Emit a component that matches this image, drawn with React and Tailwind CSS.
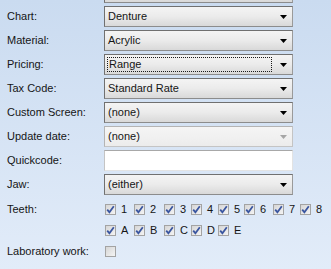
import React from 'react';

const teethTop = [
  { label: '1', w: 'w-[29px]' },
  { label: '2', w: 'w-[30px]' },
  { label: '3', w: 'w-[27px]' },
  { label: '4', w: 'w-[27px]' },
  { label: '5', w: 'w-[26px]' },
  { label: '6', w: 'w-[29px]' },
  { label: '7', w: 'w-[27px]' },
  { label: '8', w: 'w-[27px]' },
];

const teethBottom = [
  { label: 'A', w: 'w-[29px]' },
  { label: 'B', w: 'w-[30px]' },
  { label: 'C', w: 'w-[27px]' },
  { label: 'D', w: 'w-[27px]' },
  { label: 'E', w: 'w-[27px]' },
];

function Arrow({ disabled }) {
  return (
    <svg width="7" height="4" viewBox="0 0 7 4" className="shrink-0">
      <path d="M0 0H7L3.5 4Z" fill={disabled ? '#a6a6a6' : '#000'} />
    </svg>
  );
}

function Combo({ value, disabled, focused }) {
  return (
    <div
      className={`flex h-[21px] w-[189px] items-center border border-t-[#707070] border-l-[#707070] border-b-[#8c8c8c] border-r-[#9a9a9a] bg-linear-to-b ${
        disabled
          ? 'from-[#f5f5f5] via-[#f1f1f1] to-[#ececec] border-t-[#b4b4b4] border-l-[#b4b4b4] border-b-[#c4c4c4] border-r-[#c4c4c4]'
          : 'from-[#f4f4f4] via-[#ebebeb] to-[#d9d9d9]'
      }`}
    >
      <div className="flex h-full flex-1 items-center p-[2px] pr-[8px]">
        <div
          className={`flex h-full flex-1 items-center pl-[1px] ${
            focused ? 'border border-dotted border-[#1a1a1a]' : ''
          }`}
        >
          {value}
        </div>
      </div>
      <div className="mr-[5px] flex items-center">
        <Arrow disabled={disabled} />
      </div>
    </div>
  );
}

function Check({ checked }) {
  return (
    <div className="flex h-[11px] w-[11px] items-center justify-center border border-[#a3a3a3] bg-linear-to-br from-[#d6d6d6] to-[#f4f4f4]">
      {checked && (
        <svg width="9" height="9" viewBox="0 0 9 9">
          <path d="M1.2 4.6L3.4 7.2L7.8 1.2" fill="none" stroke="#3a56a0" strokeWidth="1.8" />
        </svg>
      )}
    </div>
  );
}

function Row({ label, children }) {
  return (
    <div className="mb-[3px] flex h-[21px] items-center">
      <div className="w-[104px] pl-[7px]">{label}</div>
      {children}
    </div>
  );
}

function TeethRow({ items }) {
  return (
    <div className="flex">
      {items.map((t) => (
        <div key={t.label} className={`flex items-center ${t.w}`}>
          <Check checked />
          <span className="ml-[5px]">{t.label}</span>
        </div>
      ))}
    </div>
  );
}

export default function App() {
  return (
    <div
      className="h-[269px] w-[331px] overflow-hidden bg-linear-to-b from-[#cadbf0] to-[#e2ecf9] text-[11px] leading-none text-[#151515]"
      style={{ fontFamily: '"Liberation Sans", Arial, sans-serif' }}
    >
      <div className="-mt-[18px]">
        <Row label="">
          <Combo value="" />
        </Row>
        <Row label="Chart:">
          <Combo value="Denture" />
        </Row>
        <Row label="Material:">
          <Combo value="Acrylic" />
        </Row>
        <Row label="Pricing:">
          <Combo value="Range" focused />
        </Row>
        <Row label="Tax Code:">
          <Combo value="Standard Rate" />
        </Row>
        <Row label="Custom Screen:">
          <Combo value="(none)" />
        </Row>
        <Row label="Update date:">
          <Combo value="(none)" disabled />
        </Row>
        <Row label="Quickcode:">
          <div className="h-[21px] w-[189px] border border-t-[#a8a8a8] border-l-[#c4c4c4] border-b-[#e3e3e3] border-r-[#e3e3e3] bg-white" />
        </Row>
        <Row label="Jaw:">
          <Combo value="(either)" />
        </Row>
        <div className="mt-[6px] flex h-[17px] items-center">
          <div className="w-[105px] pl-[7px]">Teeth:</div>
          <TeethRow items={teethTop} />
        </div>
        <div className="mt-[4px] flex h-[17px] items-center">
          <div className="w-[105px] pl-[7px]"></div>
          <TeethRow items={teethBottom} />
        </div>
        <div className="mt-[4px] flex h-[17px] items-center">
          <div className="w-[105px] pl-[7px]">Laboratory work:</div>
          <Check />
        </div>
      </div>
    </div>
  );
}
